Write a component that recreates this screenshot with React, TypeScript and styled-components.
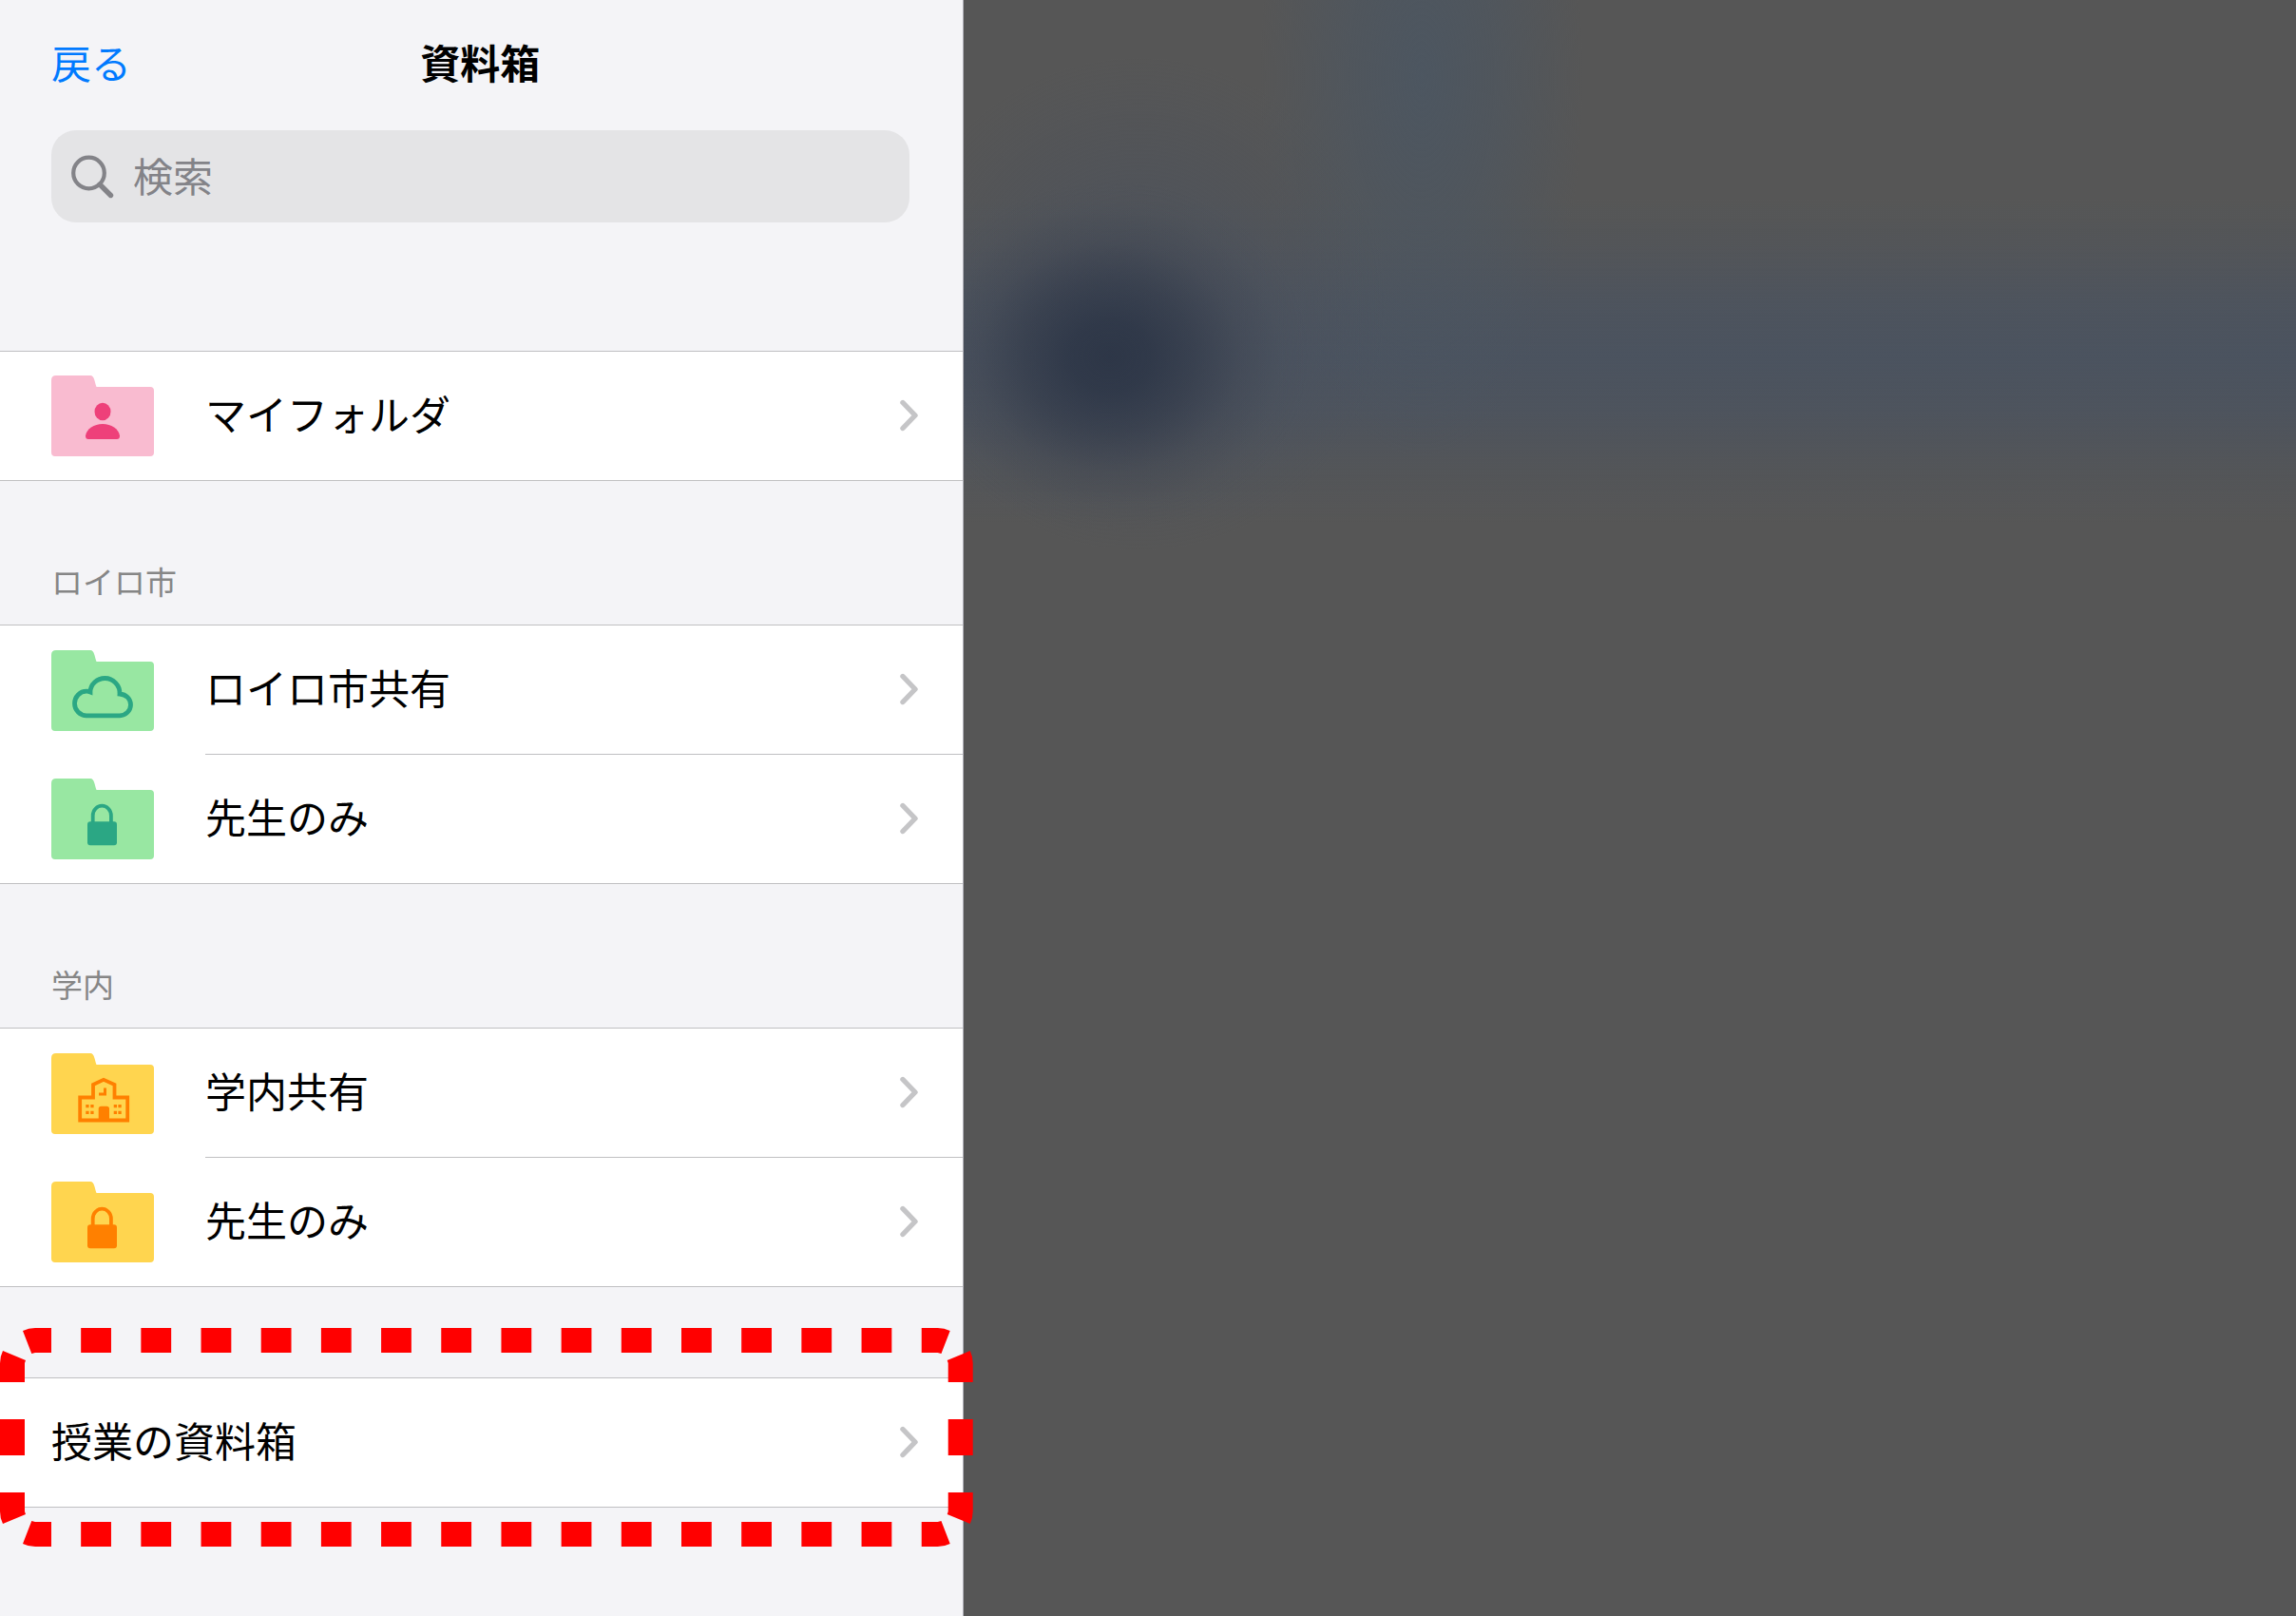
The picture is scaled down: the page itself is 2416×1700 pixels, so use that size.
import React from "react";
import styled, { createGlobalStyle } from "styled-components";

const GlobalStyle = createGlobalStyle`
  *, *::before, *::after { box-sizing: border-box; }
  body {
    margin: 0;
    background: #565656;
    color: #000;
    font-family: "Noto Sans CJK JP", "Noto Sans", sans-serif;
  }
`;

const Page = styled.div`
  display: flex;
  min-height: 100vh;
`;

const Sidebar = styled.aside`
  flex: 0 0 calc(42% - 1px);
  display: flex;
  flex-direction: column;
  background: #f4f4f7;
  border-right: 1px solid #b4b4bb;
`;

const Backdrop = styled.main`
  flex: 1;
  background:
    radial-gradient(
      ellipse 210px 185px at 154px 375px,
      rgba(44, 53, 70, 0.95) 0%,
      rgba(44, 53, 70, 0.85) 20%,
      rgba(46, 54, 70, 0.6) 42%,
      rgba(52, 58, 72, 0.26) 66%,
      rgba(60, 66, 78, 0.07) 86%,
      rgba(60, 66, 78, 0) 100%
    ),
    radial-gradient(
      ellipse 260px 260px at 184px 320px,
      rgba(72, 80, 94, 0.6) 0%,
      rgba(72, 80, 94, 0.4) 45%,
      rgba(72, 80, 94, 0) 100%
    ),
    radial-gradient(
      ellipse 170px 400px at 482px 80px,
      rgba(74, 86, 99, 0.8) 0%,
      rgba(74, 86, 99, 0.5) 45%,
      rgba(74, 86, 99, 0) 100%
    ),
    linear-gradient(
      to bottom,
      rgba(75, 83, 95, 0) 210px,
      rgba(75, 83, 95, 0.3) 260px,
      rgba(75, 83, 95, 0.8) 320px,
      rgba(75, 83, 95, 1) 375px,
      rgba(75, 83, 95, 0.8) 430px,
      rgba(75, 83, 95, 0.3) 490px,
      rgba(75, 83, 95, 0) 550px
    ),
    #565656;
`;

const Header = styled.header`
  display: grid;
  grid-template-columns: 1fr auto 1fr;
  align-items: center;
  height: 137px;
  padding: 0 56px 8px 54px;
`;

const BackButton = styled.button`
  justify-self: start;
  padding: 0;
  border: 0;
  background: none;
  color: #007aff;
  font: inherit;
  font-size: 42px;
  line-height: 60px;
  cursor: pointer;
`;

const Title = styled.h1`
  margin: 0;
  font-size: 42px;
  font-weight: 700;
  line-height: 60px;
`;

const SearchField = styled.label`
  display: flex;
  align-items: center;
  gap: 20px;
  height: 97px;
  margin: 0 56px 135px 54px;
  padding: 0 20px;
  border-radius: 26px;
  background: #e4e4e6;
  color: #838388;
`;

const SearchInput = styled.input`
  flex: 1;
  min-width: 0;
  padding: 0 0 4px;
  border: 0;
  outline: 0;
  background: none;
  color: #000;
  font: inherit;
  font-size: 42px;
  line-height: 60px;

  &::placeholder {
    color: #838388;
    opacity: 1;
  }
`;

const Section = styled.section<{ $spaced?: boolean }>`
  position: relative;
  margin-top: ${(p) => (p.$spaced ? "95px" : "0")};
`;

const SectionTitle = styled.h2`
  display: flex;
  align-items: flex-end;
  height: 151px;
  margin: 0;
  padding: 0 54px 22px;
  color: #868686;
  font-size: 33px;
  font-weight: 400;
  line-height: 48px;
`;

const List = styled.ul`
  margin: 0;
  padding: 0;
  list-style: none;
  background: #fff;
  border-top: 1px solid #c0c0c2;
  border-bottom: 1px solid #c0c0c2;
`;

const Row = styled.a`
  display: flex;
  align-items: stretch;
  gap: 54px;
  height: 136px;
  padding-left: 54px;
  color: inherit;
  text-decoration: none;

  li:last-child > & {
    height: 135px;
  }
`;

const RowBody = styled.span`
  flex: 1;
  display: flex;
  align-items: center;
  justify-content: space-between;
  padding: 0 47px 1px 0;

  li:not(:last-child) & {
    border-bottom: 1px solid #c0c0c2;
  }
`;

const RowLabel = styled.span`
  padding-bottom: 6px;
  font-size: 43px;
  line-height: 60px;
`;

const FolderSvg = styled.svg`
  flex: none;
  align-self: center;
  width: 108px;
  height: 85px;
`;

const Highlight = styled.svg`
  position: absolute;
  top: -52px;
  left: 0;
  width: calc(100% + 11px);
  height: 230px;
  pointer-events: none;
`;

type Glyph = "person" | "cloud" | "lock" | "school";

const palettes = {
  pink: { folder: "#f9bbd0", glyph: "#ee407a" },
  green: { folder: "#98e7a2", glyph: "#2ba784" },
  yellow: { folder: "#ffd54f", glyph: "#ff8000" },
};

const glyphs: Record<Glyph, React.ReactNode> = {
  person: (
    <g fill="currentColor">
      <ellipse cx="54" cy="38" rx="8.5" ry="9.3" />
      <path d="M36 63.5C37 56 45 51 54 51S71 56 72 63.5Q72 67 69 67H39Q36 67 36 63.5Z" />
    </g>
  ),
  cloud: (
    <path
      d="M37 68.8A12.5 12.8 0 0 1 37 43.2Q39 43.2 41 44C41 36 48 29.5 56.5 29.5S72.5 37 72 46C79 46.5 83.5 51.5 83.5 57.5A12 11.5 0 0 1 72 68.8Z"
      fill="none"
      stroke="currentColor"
      strokeWidth="4.8"
    />
  ),
  lock: (
    <g>
      <path d="M43.7 48V39A9.6 10.3 0 0 1 62.9 39V48" fill="none" stroke="currentColor" strokeWidth="3.8" />
      <rect x="38" y="45.3" width="31" height="25" rx="3" fill="currentColor" />
    </g>
  ),
  school: (
    <g>
      <path
        d="M30.2 46.5H44V33L55 27.8L66.5 33V46.5H80.2V70.5H30.2Z"
        fill="none"
        stroke="currentColor"
        strokeWidth="3.8"
      />
      <path d="M56.5 36.5V43H50" fill="none" stroke="currentColor" strokeWidth="3" />
      <path
        d="M49.7 71V58.5Q49.7 55.7 52.5 55.7H58.2Q61 55.7 61 58.5V71Z M36.3 54h3.3v3.3h-3.3z M41.3 54h3.3v3.3h-3.3z M36.3 60.7h3.3v3.3h-3.3z M41.3 60.7h3.3v3.3h-3.3z M65.7 54h3.3v3.3h-3.3z M70.4 54h3.3v3.3h-3.3z M65.7 60.7h3.3v3.3h-3.3z M70.4 60.7h3.3v3.3h-3.3z"
        fill="currentColor"
      />
    </g>
  ),
};

function FolderIcon({ tone, glyph }: { tone: keyof typeof palettes; glyph: Glyph }) {
  return (
    <FolderSvg viewBox="0 0 108 85" color={palettes[tone].glyph} aria-hidden="true">
      <path
        d="M5 0H41C45.5 0 45.5 7 47.5 12H104Q108 12 108 16V81Q108 85 104 85H4Q0 85 0 81V5Q0 0 5 0Z"
        fill={palettes[tone].folder}
      />
      {glyphs[glyph]}
    </FolderSvg>
  );
}

function Chevron() {
  return (
    <svg width="19" height="34" viewBox="0 0 19 34" fill="none" aria-hidden="true">
      <path d="M3 3.5L16 17L3 30.5" stroke="#c5c5c7" strokeWidth="5.4" strokeLinecap="round" strokeLinejoin="round" />
    </svg>
  );
}

function SearchIcon() {
  return (
    <svg width="46" height="46" viewBox="0 0 46 46" fill="none" stroke="currentColor" aria-hidden="true">
      <circle cx="19.5" cy="19" r="16.3" strokeWidth="4.2" />
      <path d="M31 31L42.5 42.5" strokeWidth="5.4" strokeLinecap="round" />
    </svg>
  );
}

const corners = ["", "translate(1024 0) scale(-1 1)", "translate(0 230) scale(1 -1)", "translate(1024 230) scale(-1 -1)"];

function DashedHighlight() {
  return (
    <Highlight viewBox="0 0 1024 230" preserveAspectRatio="none" aria-hidden="true">
      <g fill="#f00">
        {corners.map((transform) => (
          <path
            key={transform}
            transform={transform}
            d="M54 0H37Q30 0 24 3L33.3 27L37 26H54Z M0 57V37Q0 30 3 24L27 34L26 37V57Z"
          />
        ))}
      </g>
      <g stroke="#f00" strokeWidth="26">
        <path d="M85.2 13H940M85.2 217H940" strokeDasharray="31.8 31.4" />
        <path d="M13 96V134M1011 96V134" />
      </g>
    </Highlight>
  );
}

type Item = { label: string; tone?: keyof typeof palettes; glyph?: Glyph };

function ItemList({ items }: { items: Item[] }) {
  return (
    <List>
      {items.map((item) => (
        <li key={item.label}>
          <Row href="#">
            {item.tone && item.glyph && <FolderIcon tone={item.tone} glyph={item.glyph} />}
            <RowBody>
              <RowLabel>{item.label}</RowLabel>
              <Chevron />
            </RowBody>
          </Row>
        </li>
      ))}
    </List>
  );
}

export default function App() {
  return (
    <>
      <GlobalStyle />
      <Page>
        <Sidebar>
          <Header>
            <BackButton type="button">戻る</BackButton>
            <Title>資料箱</Title>
          </Header>
          <SearchField>
            <SearchIcon />
            <SearchInput type="text" placeholder="検索" aria-label="検索" />
          </SearchField>
          <Section>
            <ItemList items={[{ label: "マイフォルダ", tone: "pink", glyph: "person" }]} />
          </Section>
          <Section>
            <SectionTitle>ロイロ市</SectionTitle>
            <ItemList
              items={[
                { label: "ロイロ市共有", tone: "green", glyph: "cloud" },
                { label: "先生のみ", tone: "green", glyph: "lock" },
              ]}
            />
          </Section>
          <Section>
            <SectionTitle>学内</SectionTitle>
            <ItemList
              items={[
                { label: "学内共有", tone: "yellow", glyph: "school" },
                { label: "先生のみ", tone: "yellow", glyph: "lock" },
              ]}
            />
          </Section>
          <Section $spaced>
            <ItemList items={[{ label: "授業の資料箱" }]} />
            <DashedHighlight />
          </Section>
        </Sidebar>
        <Backdrop />
      </Page>
    </>
  );
}
